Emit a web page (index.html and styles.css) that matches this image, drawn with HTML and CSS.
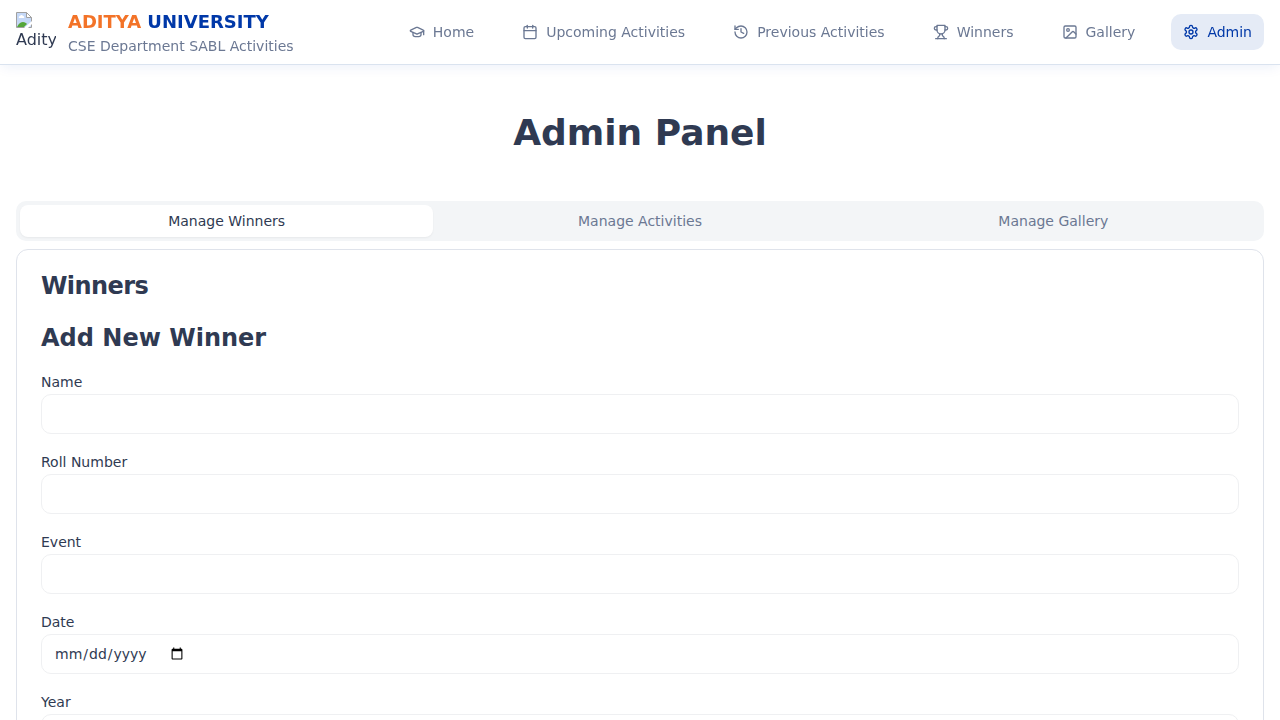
FILE: index.html
```html
<!DOCTYPE html>
<html lang="en">
<head>
<meta charset="utf-8">
<title>Admin Panel</title>
<link rel="stylesheet" href="styles.css">
</head>
<body>
<header class="header">
  <div class="brand">
    <div class="logo">
      <svg class="logo-icon" width="16" height="16" viewBox="0 0 16 16">
        <path d="M.5.5h10l5 5v10H.5z" fill="#c5d8f7" stroke="#a0a0a0"/>
        <path d="M10.500.5v5h5z" fill="#fff" stroke="#a0a0a0"/>
        <path d="M3 6a1.300 1.300 0 0 1 1-2 1.700 1.700 0 0 1 3 0 1.200 1.200 0 0 1 1 2z" fill="#fff"/>
        <path d="M1 15c2-4 4-5 6-5s3 1 4 2l-3 3z" fill="#55a63a"/>
        <path d="M8 16l8-7v3l-4 4z" fill="#fff"/>
      </svg>
      <span class="logo-text">Adity</span>
    </div>
    <div>
      <div class="brand-name"><span class="brand-accent">ADITYA</span> UNIVERSITY</div>
      <div class="brand-sub">CSE Department SABL Activities</div>
    </div>
  </div>
  <nav class="nav">
    <a class="nav-item"><svg class="icon" viewBox="0 0 24 24"><path d="M21.420 10.922a1 1 0 0 0-.019-1.838L12.830 5.180a2 2 0 0 0-1.660 0L2.600 9.080a1 1 0 0 0 0 1.832l8.570 3.908a2 2 0 0 0 1.660 0z"/><path d="M22 10v6"/><path d="M6 12.500V16a6 3 0 0 0 12 0v-3.500"/></svg>Home</a>
    <a class="nav-item"><svg class="icon" viewBox="0 0 24 24"><path d="M8 2v4"/><path d="M16 2v4"/><rect width="18" height="18" x="3" y="4" rx="2"/><path d="M3 10h18"/></svg>Upcoming Activities</a>
    <a class="nav-item"><svg class="icon" viewBox="0 0 24 24"><path d="M3 12a9 9 0 1 0 9-9 9.750 9.750 0 0 0-6.740 2.740L3 8"/><path d="M3 3v5h5"/><path d="M12 7v5l4 2"/></svg>Previous Activities</a>
    <a class="nav-item"><svg class="icon" viewBox="0 0 24 24"><path d="M6 9H4.500a2.500 2.500 0 0 1 0-5H6"/><path d="M18 9h1.500a2.500 2.500 0 0 0 0-5H18"/><path d="M4 22h16"/><path d="M10 14.660V17c0 .55-.47.98-.97 1.210C7.850 18.750 7 20.240 7 22"/><path d="M14 14.660V17c0 .55.47.98.97 1.210C16.150 18.750 17 20.240 17 22"/><path d="M18 2H6v7a6 6 0 0 0 12 0V2Z"/></svg>Winners</a>
    <a class="nav-item"><svg class="icon" viewBox="0 0 24 24"><rect width="18" height="18" x="3" y="3" rx="2"/><circle cx="9" cy="9" r="2"/><path d="m21 15-3.086-3.086a2 2 0 0 0-2.828 0L6 21"/></svg>Gallery</a>
    <a class="nav-item nav-active"><svg class="icon" viewBox="0 0 24 24"><path d="M12.220 2h-.44a2 2 0 0 0-2 2v.18a2 2 0 0 1-1 1.730l-.43.25a2 2 0 0 1-2 0l-.15-.08a2 2 0 0 0-2.730.73l-.22.38a2 2 0 0 0 .73 2.730l.15.1a2 2 0 0 1 1 1.720v.51a2 2 0 0 1-1 1.740l-.15.09a2 2 0 0 0-.73 2.730l.22.38a2 2 0 0 0 2.730.73l.15-.08a2 2 0 0 1 2 0l.43.25a2 2 0 0 1 1 1.730V20a2 2 0 0 0 2 2h.44a2 2 0 0 0 2-2v-.18a2 2 0 0 1 1-1.730l.43-.25a2 2 0 0 1 2 0l.15.08a2 2 0 0 0 2.730-.73l.22-.39a2 2 0 0 0-.73-2.730l-.15-.08a2 2 0 0 1-1-1.740v-.5a2 2 0 0 1 1-1.740l.15-.09a2 2 0 0 0 .73-2.730l-.22-.38a2 2 0 0 0-2.730-.73l-.15.08a2 2 0 0 1-2 0l-.43-.25a2 2 0 0 1-1-1.730V4a2 2 0 0 0-2-2z"/><circle cx="12" cy="12" r="3"/></svg>Admin</a>
  </nav>
</header>
<main class="main">
  <h1 class="title">Admin Panel</h1>
  <div class="tabs">
    <button class="tab tab-active">Manage Winners</button>
    <button class="tab">Manage Activities</button>
    <button class="tab">Manage Gallery</button>
  </div>
  <section class="card">
    <h3 class="card-title">Winners</h3>
    <h2 class="form-title">Add New Winner</h2>
    <form class="form">
      <div class="field"><label class="label" for="name">Name</label><input class="input" id="name"></div>
      <div class="field"><label class="label" for="roll">Roll Number</label><input class="input" id="roll"></div>
      <div class="field"><label class="label" for="event">Event</label><input class="input" id="event"></div>
      <div class="field"><label class="label" for="date">Date</label><input class="input" id="date" type="date"></div>
      <div class="field"><label class="label" for="year">Year</label><input class="input" id="year"></div>
    </form>
  </section>
</main>
</body>
</html>
```
FILE: styles.css
```css
* { box-sizing: border-box; }
html { height: 100%; overflow: hidden; }
body {
  margin: 0;
  height: 100%;
  overflow: hidden;
  background: #fff;
  color: #2f3a52;
  font: 16px/24px "DejaVu Sans", sans-serif;
}
h1, h2, h3 { margin: 0; }
.header {
  position: relative;
  z-index: 1;
  height: 65px;
  padding: 0 16px;
  display: flex;
  align-items: center;
  justify-content: space-between;
  border-bottom: 1px solid #dae3ef;
  background: rgba(255, 255, 255, 0.95);
  backdrop-filter: blur(8px);
  box-shadow: 0 4px 12px -2px rgba(0, 58, 173, 0.08);
}
.brand { display: flex; align-items: center; gap: 12px; }
.logo { width: 40px; height: 40px; overflow: hidden; }
.logo-icon { display: block; }
.logo-text { display: block; line-height: 19px; margin-top: 2px; }
.brand-name { font-size: 18px; line-height: 28px; font-weight: 700; color: #0038a8; }
.brand-accent { color: #f37328; }
.brand-sub { font-size: 14px; line-height: 20px; color: #6b7893; }
.nav { display: flex; gap: 24px; }
.nav-item {
  display: flex;
  align-items: center;
  gap: 8px;
  padding: 8px 12px;
  border-radius: 10px;
  font-size: 14px;
  line-height: 20px;
  color: #6b7893;
}
.nav-active { background: #e5ebf6; color: #0038a8; }
.icon {
  width: 16px;
  height: 16px;
  fill: none;
  stroke: currentColor;
  stroke-width: 2;
  stroke-linecap: round;
  stroke-linejoin: round;
}
.main { padding: 48px 16px 0; }
.title { font-size: 36px; line-height: 40px; text-align: center; margin-bottom: 48px; }
.tabs {
  display: grid;
  grid-template-columns: repeat(3, 1fr);
  height: 40px;
  padding: 4px;
  border-radius: 10px;
  background: #f3f5f7;
}
.tab {
  border: 0;
  padding: 0 12px;
  border-radius: 8px;
  background: transparent;
  color: #6b7893;
  font: 14px/20px "DejaVu Sans", sans-serif;
}
.tab-active { background: #fff; color: #2f3a52; box-shadow: 0 1px 2px rgba(0, 0, 0, 0.05); }
.card {
  margin-top: 8px;
  padding: 24px 24px 48px;
  border: 1px solid #dfe3eb;
  border-radius: 12px;
}
.card-title { font-size: 24px; line-height: 24px; letter-spacing: -0.6px; }
.form-title { font-size: 24px; line-height: 32px; margin-top: 24px; }
.form { display: grid; gap: 16px; margin-top: 16px; }
.field { height: 64px; }
.label { display: block; font-size: 14px; line-height: 24px; }
.input {
  display: flex;
  width: 100%;
  height: 40px;
  padding: 8px 12px;
  border: 1px solid #eff0f2;
  border-radius: 10px;
  background: #fff;
  color: inherit;
  font: 14px/20px "DejaVu Sans", sans-serif;
}
```
